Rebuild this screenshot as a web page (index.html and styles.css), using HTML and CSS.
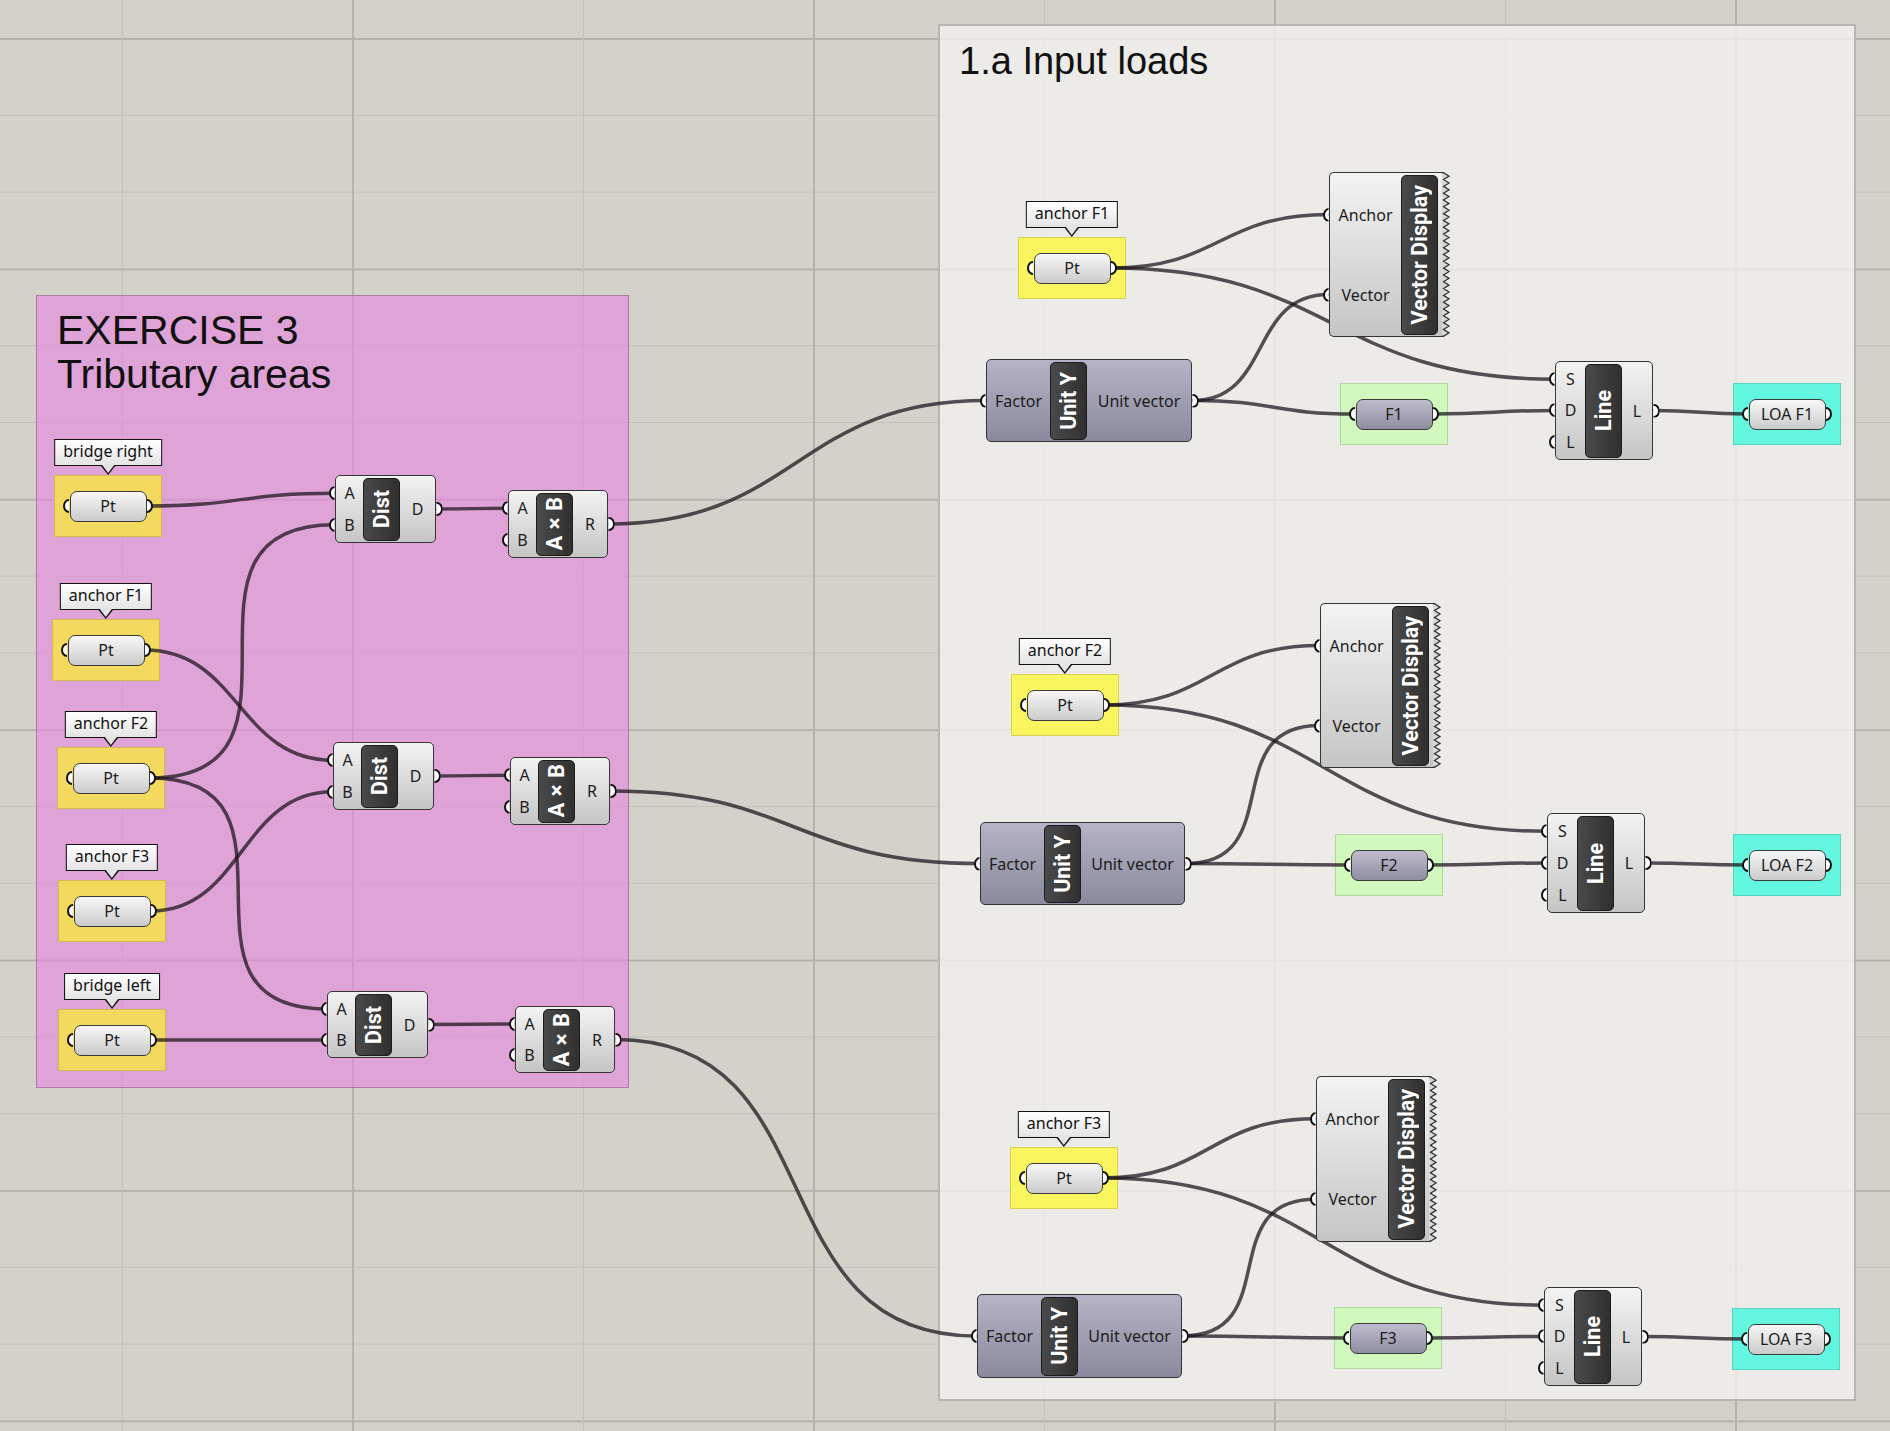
FILE: index.html
```html
<!DOCTYPE html>
<html lang="en">

<head>
    <meta charset="UTF-8">
    <title>Tributary areas - Input loads</title>
    <link rel="stylesheet" href="styles.css">
</head>

<body>
    <div class="canvas" id="canvas">
        <div class="layer" id="groups"></div>
        <svg class="wires" id="wires" width="1890" height="1431"></svg>
        <div class="layer" id="nodes"></div>
    </div>

    <script>
        const SVG_NS = 'http://www.w3.org/2000/svg';

        const groups = [
            { x: 36, y: 295, w: 593, h: 793, cls: 'pink', title: ['EXERCISE 3', 'Tributary areas'] },
            { x: 938, y: 24, w: 918, h: 1377, cls: 'light', title: ['1.a Input loads'] }
        ];

        // parametros: caja de color + capsula (+ etiqueta)
        const params = [
            { id: 'bR', x: 54, y: 475, bg: 'gold', text: 'Pt', tag: 'bridge right' },
            { id: 'aF1', x: 52, y: 619, bg: 'gold', text: 'Pt', tag: 'anchor F1' },
            { id: 'aF2', x: 57, y: 747, bg: 'gold', text: 'Pt', tag: 'anchor F2' },
            { id: 'aF3', x: 58, y: 880, bg: 'gold', text: 'Pt', tag: 'anchor F3' },
            { id: 'bL', x: 58, y: 1009, bg: 'gold', text: 'Pt', tag: 'bridge left' },
            { id: 'p1', x: 1018, y: 237, bg: 'yellow', text: 'Pt', tag: 'anchor F1' },
            { id: 'p2', x: 1011, y: 674, bg: 'yellow', text: 'Pt', tag: 'anchor F2' },
            { id: 'p3', x: 1010, y: 1147, bg: 'yellow', text: 'Pt', tag: 'anchor F3' },
            { id: 'f1', x: 1340, y: 383, bg: 'green', text: 'F1', purple: true },
            { id: 'f2', x: 1335, y: 834, bg: 'green', text: 'F2', purple: true },
            { id: 'f3', x: 1334, y: 1307, bg: 'green', text: 'F3', purple: true },
            { id: 'l1', x: 1733, y: 383, bg: 'cyan', text: 'LOA F1' },
            { id: 'l2', x: 1733, y: 834, bg: 'cyan', text: 'LOA F2' },
            { id: 'l3', x: 1732, y: 1308, bg: 'cyan', text: 'LOA F3' }
        ];

        const dist = { w: 101, h: 68, inW: 27, name: 'Dist', ins: ['A', 'B'], outs: ['D'] };
        const mult = { w: 100, h: 68, inW: 27, name: 'A×B', ins: ['A', 'B'], outs: ['R'] };
        const vdisp = { w: 113, h: 165, inW: 71, name: 'Vector Display', ins: ['Anchor', 'Vector'], outs: [], torn: true };
        const unitY = { w: 206, h: 83, inW: 63, name: 'Unit Y', ins: ['Factor'], outs: ['Unit vector'], purple: true };
        const line = { w: 98, h: 99, inW: 29, name: 'Line', ins: ['S', 'D', 'L'], outs: ['L'] };

        const comps = [
            { id: 'd1', x: 335, y: 475, ...dist },
            { id: 'm1', x: 508, y: 490, ...mult },
            { id: 'd2', x: 333, y: 742, ...dist },
            { id: 'm2', x: 510, y: 757, ...mult },
            { id: 'd3', x: 327, y: 991, ...dist, h: 67 },
            { id: 'm3', x: 515, y: 1006, ...mult, h: 67 },
            { id: 'v1', x: 1329, y: 172, ...vdisp },
            { id: 'v2', x: 1320, y: 603, ...vdisp },
            { id: 'v3', x: 1316, y: 1076, ...vdisp, h: 166 },
            { id: 'u1', x: 986, y: 359, ...unitY },
            { id: 'u2', x: 980, y: 822, ...unitY, w: 205 },
            { id: 'u3', x: 977, y: 1294, ...unitY, w: 205, h: 84 },
            { id: 'n1', x: 1555, y: 361, ...line },
            { id: 'n2', x: 1547, y: 813, ...line, h: 100 },
            { id: 'n3', x: 1544, y: 1287, ...line }
        ];

        const wires = [
            ['bR', 0, 'd1', 0], ['aF2', 0, 'd1', 1],
            ['aF1', 0, 'd2', 0], ['aF3', 0, 'd2', 1],
            ['aF2', 0, 'd3', 0], ['bL', 0, 'd3', 1],
            ['d1', 0, 'm1', 0], ['d2', 0, 'm2', 0], ['d3', 0, 'm3', 0],
            ['m1', 0, 'u1', 0], ['m2', 0, 'u2', 0], ['m3', 0, 'u3', 0]
        ];
        for (let k = 1; k <= 3; k++) {
            wires.push(['p' + k, 0, 'v' + k, 0]);
            wires.push(['p' + k, 0, 'n' + k, 0]);
            wires.push(['u' + k, 0, 'v' + k, 1]);
            wires.push(['u' + k, 0, 'f' + k, 0]);
            wires.push(['f' + k, 0, 'n' + k, 1]);
            wires.push(['n' + k, 0, 'l' + k, 0]);
        }

        const grips = {};

        function el(tag, cls, parent) {
            const node = document.createElement(tag);
            if (cls) node.className = cls;
            if (parent) parent.appendChild(node);
            return node;
        }

        function place(node, o) {
            node.style.left = o.x + 'px';
            node.style.top = o.y + 'px';
            node.style.width = o.w + 'px';
            node.style.height = o.h + 'px';
        }

        function addGrip(parent, id, dir) {
            const g = el('span', 'grip ' + dir, parent);
            grips[id] = grips[id] || { in: [], out: [] };
            grips[id][dir].push(g);
        }

        function zigzag(h) {
            const svg = document.createElementNS(SVG_NS, 'svg');
            svg.setAttribute('class', 'zig');
            svg.setAttribute('width', 8);
            svg.setAttribute('height', h);
            const steps = Math.round((h - 2) / 3.4);
            const dy = (h - 1.5) / steps;
            let pts = '0,0.75';
            for (let i = 0; i <= steps; i++) {
                pts += ' ' + (i % 2 ? 7 : 1.5) + ',' + (0.75 + i * dy).toFixed(2);
            }
            pts += ' 0,' + (h - 0.75);
            const fill = document.createElementNS(SVG_NS, 'polygon');
            fill.setAttribute('points', pts);
            fill.setAttribute('class', 'zig-fill');
            const edge = document.createElementNS(SVG_NS, 'polyline');
            edge.setAttribute('points', pts);
            edge.setAttribute('class', 'zig-edge');
            svg.appendChild(fill);
            svg.appendChild(edge);
            return svg;
        }

        const groupLayer = document.getElementById('groups');
        const nodeLayer = document.getElementById('nodes');

        groups.forEach(g => {
            const box = el('div', 'group ' + g.cls, groupLayer);
            place(box, g);
            g.title.forEach(t => {
                el('div', 'group-title', box).textContent = t;
            });
        });

        params.forEach(p => {
            const box = { x: p.x, y: p.y, w: 108, h: 62 };
            place(el('div', 'swatch ' + p.bg, groupLayer), box);

            const wrap = el('div', 'param', nodeLayer);
            place(wrap, box);
            if (p.tag) el('div', 'tag', wrap).textContent = p.tag;
            const cap = el('div', 'cap' + (p.purple ? ' purple' : ''), wrap);
            el('span', '', cap).textContent = p.text;
            addGrip(cap, p.id, 'in');
            addGrip(cap, p.id, 'out');
        });

        comps.forEach(c => {
            let cls = 'comp';
            if (c.purple) cls += ' purple';
            if (c.torn) cls += ' torn';
            const box = el('div', cls, nodeLayer);
            place(box, c);

            const ins = el('div', 'ports', box);
            ins.style.width = c.inW + 'px';
            c.ins.forEach(name => {
                const port = el('div', 'port', ins);
                el('span', '', port).textContent = name;
                addGrip(port, c.id, 'in');
            });

            const pill = el('div', 'pill', box);
            el('span', '', pill).textContent = c.name;

            if (c.torn) {
                box.appendChild(zigzag(c.h));
                return;
            }
            const outs = el('div', 'ports outs', box);
            c.outs.forEach(name => {
                const port = el('div', 'port', outs);
                el('span', '', port).textContent = name;
                addGrip(port, c.id, 'out');
            });
        });

        function centre(g) {
            const r = g.getBoundingClientRect();
            return { x: r.left + r.width / 2, y: r.top + r.height / 2 };
        }

        // los cables tiran mas en vertical cuando el salto en y es grande
        const wireLayer = document.getElementById('wires');
        wires.forEach(([a, ai, b, bi]) => {
            const s = centre(grips[a].out[ai]);
            const e = centre(grips[b].in[bi]);
            const dx = Math.abs(e.x - s.x);
            const dy = Math.abs(e.y - s.y);
            const k = Math.max(dx * 0.5, Math.min(dx, dy * 0.75), 30);
            const path = document.createElementNS(SVG_NS, 'path');
            path.setAttribute('d', `M${s.x} ${s.y} C${s.x + k} ${s.y} ${e.x - k} ${e.y} ${e.x} ${e.y}`);
            wireLayer.appendChild(path);
        });
    </script>
</body>

</html>
```

FILE: styles.css
```css
* {
    box-sizing: border-box;
}

body {
    margin: 0;
    overflow: hidden;
    font-family: "Noto Sans", "Open Sans", sans-serif;
    color: #1c1c1c;
}

.canvas {
    position: relative;
    width: 1890px;
    height: 1431px;
    background-color: #d4d0ca;
    background-image:
        linear-gradient(90deg, #c4c0bb 0 1px, transparent 1px 230px, #b6b2ad 230px 232px, transparent 232px),
        linear-gradient(180deg, #b6b2ad 0 2px, transparent 2px 77px, #c4c0bb 77px 78px, transparent 78px 153.6px, #c4c0bb 153.6px 154.6px, transparent 154.6px);
    background-size: 461px 100%, 100% 230.4px;
    background-position: 122px 0, 0 38px;
}

.layer {
    position: absolute;
    left: 0;
    top: 0;
    width: 100%;
    height: 100%;
}

.wires {
    position: absolute;
    left: 0;
    top: 0;
}

.wires path {
    fill: none;
    stroke: rgba(28, 22, 28, 0.74);
    stroke-width: 3.5;
}

/* grupos */
.group {
    position: absolute;
}

.group.pink {
    background: rgba(232, 133, 225, 0.6);
    border: 1.5px solid rgba(110, 70, 105, 0.45);
    padding: 12px 20px;
}

.group.light {
    background: rgba(244, 244, 242, 0.75);
    border: 2px solid #b8b5b0;
    padding: 14px 19px;
}

.group-title {
    font-family: "Liberation Sans", Arial, sans-serif;
    color: #111;
}

.pink .group-title {
    font-size: 41px;
    line-height: 44px;
}

.light .group-title {
    font-size: 38px;
    line-height: 42px;
}

.swatch {
    position: absolute;
    border: 1px solid rgba(0, 0, 0, 0.14);
}

.swatch.gold {
    background: #f3d95d;
}

.swatch.yellow {
    background: #f8f55e;
}

.swatch.green {
    background: #d1f8bd;
}

.swatch.cyan {
    background: #63f7df;
}

/* parametros */
.param {
    position: absolute;
    display: flex;
    align-items: center;
    justify-content: center;
}

.cap {
    position: relative;
    width: 77px;
    height: 31px;
    border: 1.5px solid #3a3a3a;
    border-radius: 7px;
    background: linear-gradient(#f7f7f7, #cbcbcb);
    display: flex;
    align-items: center;
    justify-content: center;
    font-size: 16px;
}

.cap.purple {
    background: linear-gradient(#bebccc, #8f8da1);
}

.tag {
    position: absolute;
    left: 50%;
    bottom: calc(100% + 9px);
    transform: translateX(-50%);
    height: 27px;
    padding: 0 8px;
    border: 1.5px solid #111;
    background: linear-gradient(#ffffff, #e4e4e4);
    font-size: 16px;
    line-height: 23px;
    white-space: nowrap;
    color: #111;
}

.tag::before,
.tag::after {
    content: "";
    position: absolute;
    left: 50%;
    transform: translateX(-50%);
    border-style: solid;
    border-color: transparent;
}

.tag::before {
    top: 100%;
    border-width: 10.5px 8px 0;
    border-top-color: #111;
}

.tag::after {
    top: calc(100% - 0.5px);
    border-width: 8px 6px 0;
    border-top-color: #e4e4e4;
}

/* componentes */
.comp {
    position: absolute;
    display: flex;
    border: 1.5px solid #353535;
    border-radius: 5px;
    background: linear-gradient(#f3f3f3, #c5c5c5);
}

.comp.purple {
    background: linear-gradient(#b5b3c5, #8b899d);
}

.comp.torn {
    border-right: none;
    border-radius: 5px 0 0 5px;
    padding-right: 3px;
}

.ports {
    display: flex;
    flex-direction: column;
    padding: 1.5px 0;
}

.ports.outs {
    flex: 1;
}

.port {
    flex: 1;
    position: relative;
    display: flex;
    align-items: center;
    justify-content: center;
    font-size: 16px;
    white-space: nowrap;
}

.pill {
    width: 37px;
    margin: 1.5px 0;
    border: 1.5px solid #1c1c1c;
    border-radius: 5px;
    background: linear-gradient(90deg, #4a4a4a, #303030);
    display: flex;
    align-items: center;
    justify-content: center;
}

.pill span {
    writing-mode: vertical-rl;
    transform: rotate(180deg);
    font-family: Roboto, "Noto Sans", sans-serif;
    font-weight: 700;
    font-size: 21.5px;
    color: #fff;
    white-space: nowrap;
}

.grip {
    position: absolute;
    top: 50%;
    width: 12px;
    height: 14px;
    margin-top: -7px;
    border: 2.5px solid #111;
    border-radius: 50%;
    background: #fff;
}

.grip.in {
    left: -7.5px;
    clip-path: inset(0 50% 0 0);
}

.grip.out {
    right: -7.5px;
    clip-path: inset(0 0 0 50%);
}

.zig {
    position: absolute;
    left: 100%;
    top: -1.5px;
    overflow: visible;
}

.zig-fill {
    fill: #d9d9d9;
}

.zig-edge {
    fill: none;
    stroke: #353535;
    stroke-width: 1.3;
}
```
